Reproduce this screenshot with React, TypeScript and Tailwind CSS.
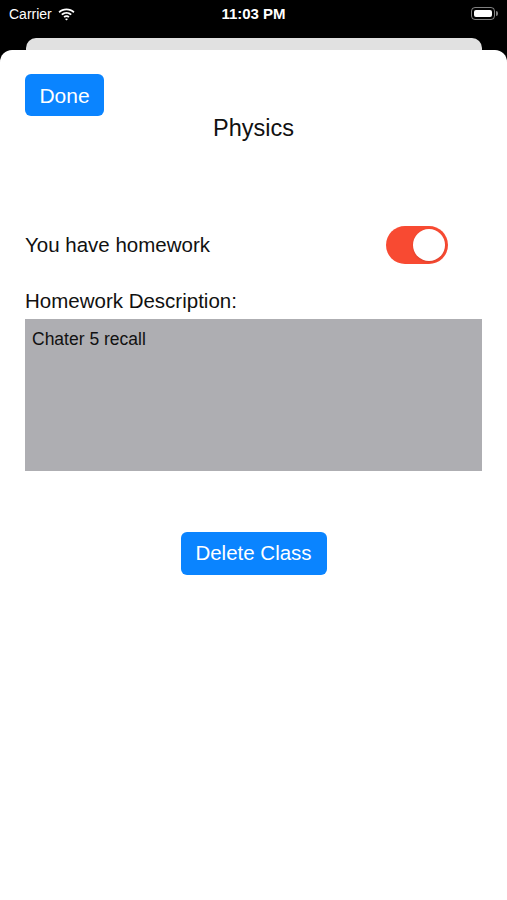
import React, { useState } from 'react';

const font = { fontFamily: '"Liberation Sans", Arial, sans-serif' };

const StatusBar: React.FC = () => (
  <div className="relative h-[50px] flex items-start px-[9px] pt-[5px] text-white">
    <div className="flex items-center gap-[6px] h-[18px]">
      <span className="text-[14px]">Carrier</span>
      <svg width="17" height="13" viewBox="0 0 17 13" fill="white">
        <path d="M8.5 2.2c2.6 0 5 1 6.8 2.7l1.2-1.3C14.4 1.6 11.6.4 8.5.4S2.6 1.6.5 3.6l1.2 1.3C3.5 3.2 5.9 2.2 8.5 2.2z" />
        <path d="M8.5 5.7c1.6 0 3 .6 4.1 1.6l1.2-1.3C12.4 4.7 10.5 3.9 8.5 3.9S4.6 4.7 3.2 6l1.2 1.3c1.1-1 2.5-1.6 4.1-1.6z" />
        <path d="M8.5 9.1c.7 0 1.3.3 1.8.7l1.2-1.3c-.8-.7-1.8-1.2-3-1.2s-2.2.5-3 1.2l1.2 1.3c.5-.4 1.1-.7 1.8-.7z" />
        <path d="M8.5 12.6l1.5-1.6c-.4-.4-.9-.6-1.5-.6s-1.1.2-1.5.6z" />
      </svg>
    </div>
    <div className="absolute left-0 right-0 top-[5px] h-[18px] flex justify-center items-center">
      <span className="text-[15px] font-semibold">11:03 PM</span>
    </div>
    <div className="absolute right-[9px] top-[7px] flex items-center">
      <div className="w-[24px] h-[13px] rounded-[4px] border border-white/50 p-[2px]">
        <div className="w-full h-full rounded-[2px] bg-white" />
      </div>
      <div className="w-[2px] h-[5px] rounded-r-sm bg-white/50 ml-[1px]" />
    </div>
  </div>
);

const App: React.FC = () => {
  const [hasHomework, setHasHomework] = useState(true);

  return (
    <div className="w-[507px] h-[900px] bg-black overflow-hidden flex flex-col" style={font}>
      <StatusBar />

      {/* Sheet behind */}
      <div className="relative">
        <div className="absolute left-[26px] right-[25px] -top-[12px] h-[24px] rounded-t-[10px] bg-[#e1e1e1]" />
      </div>

      {/* Modal sheet */}
      <div className="relative flex-1 bg-white rounded-t-[12px] flex flex-col px-[25px]">
        <div className="pt-[24px]">
          <button
            type="button"
            className="h-[42px] w-[79px] rounded-[6px] bg-[#0a84ff] text-white text-[21px] flex items-center justify-center pt-[1px]"
          >
            Done
          </button>
        </div>
        <h1 className="text-center text-[23.5px] text-[#111] leading-[26px] -mt-[1px]">Physics</h1>

        {/* Homework toggle row */}
        <div className="mt-[85px] flex items-center justify-between h-[38px]">
          <span className="text-[20.5px] text-[#111]">You have homework</span>
          <button
            type="button"
            onClick={() => setHasHomework(!hasHomework)}
            className={`mr-[34px] w-[62px] h-[38px] rounded-full p-[3px] flex items-center ${
              hasHomework ? 'bg-[#f84a32] justify-end' : 'bg-[#e5e5ea] justify-start'
            }`}
          >
            <span className="w-[32px] h-[32px] rounded-full bg-white shadow-sm" />
          </button>
        </div>

        {/* Description */}
        <label className="mt-[25px] text-[20.5px] text-[#111] leading-[24px]">Homework Description:</label>
        <div className="mt-[6px] h-[152px] bg-[#aeaeb2] px-[7px] pt-[7px]">
          <span className="text-[17.5px] text-[#111]">Chater 5 recall</span>
        </div>

        <div className="mt-[61px] flex justify-center">
          <button
            type="button"
            className="h-[43px] w-[146px] rounded-[6px] bg-[#0a84ff] text-white text-[20.5px] flex items-center justify-center"
          >
            Delete Class
          </button>
        </div>
      </div>
    </div>
  );
};

export default App;
